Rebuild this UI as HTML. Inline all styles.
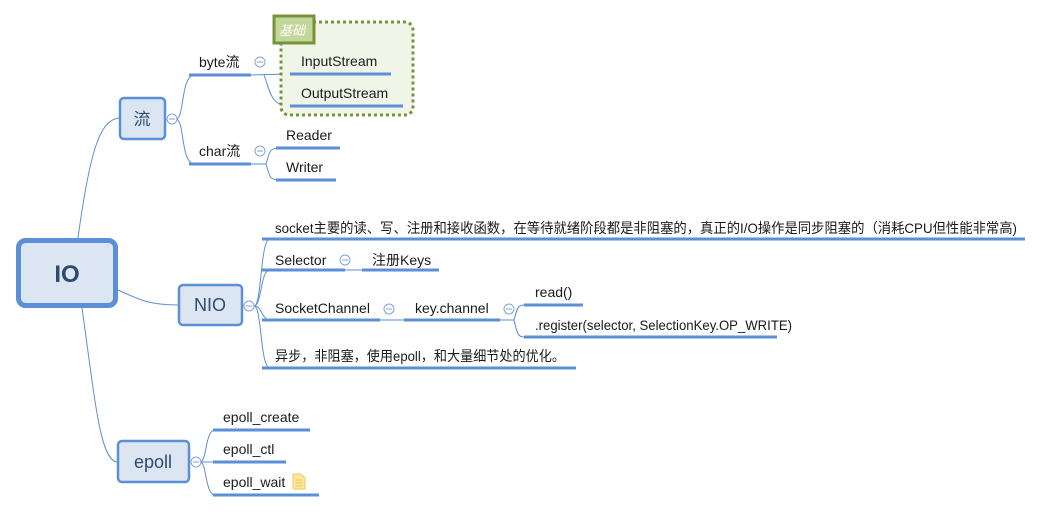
<!DOCTYPE html>
<html><head><meta charset="utf-8"><style>
html,body{margin:0;padding:0;background:#fff;width:1043px;height:512px;overflow:hidden}
svg text{font-family:"Liberation Sans","Noto Sans CJK SC",sans-serif;font-size:14px;fill:#1a1a1a}
</style></head><body>
<svg width="1043" height="512" viewBox="0 0 1043 512" xmlns="http://www.w3.org/2000/svg">
<g fill="none" stroke="#5b8fd6" stroke-width="1">
<path d="M78 238 C90 150 100 120 119 118"/>
<path d="M118 290 C140 300 150 305 178 305"/>
<path d="M82 308 C95 400 100 460 117 462"/>
<path d="M176 119 C185 119 180 75 195 75"/>
<path d="M176 119 C185 119 180 164 195 164"/>
<path d="M251 75 L290 74"/>
<path d="M264 75 C270 90 270 106 290 106"/>
<path d="M251 164 L266 164"/>
<path d="M266 164 C270 150 270 148 280 148"/>
<path d="M266 164 C270 178 270 180 280 180"/>
<path d="M254 306 C262 306 260 239 270 239"/>
<path d="M254 306 C262 306 260 270 270 270"/>
<path d="M254 306 C262 306 262 320 270 320"/>
<path d="M254 306 C262 306 260 368 270 368"/>
<path d="M345 270 L362 270"/>
<path d="M380 320 L404 320"/>
<path d="M500 320 L514 320"/>
<path d="M514 320 C518 305 518 305 528 305"/>
<path d="M514 320 C518 337 518 337 528 337"/>
<path d="M200 462 C207 462 205 430 215 430"/>
<path d="M200 462 L215 462"/>
<path d="M200 462 C207 462 205 495 215 495"/>
</g>
<rect x="281" y="22" width="132" height="93" rx="8" fill="#f1f5e8" stroke="#76923c" stroke-width="3" stroke-dasharray="3,3"/>
<rect x="274" y="16" width="40" height="27" fill="#c4d79b" stroke="#76923c" stroke-width="3"/>
<text x="279" y="35" style="fill:#fff;font-style:italic;font-size:13px">基础</text>
<g fill="#5b8fd6">
<rect x="189" y="73.5" width="62" height="3"/>
<rect x="189" y="162.5" width="62" height="3"/>
<rect x="290" y="72.5" width="101" height="3"/>
<rect x="290" y="104.5" width="113" height="3"/>
<rect x="276" y="146.5" width="64" height="3"/>
<rect x="276" y="178.5" width="60" height="3"/>
<rect x="262" y="237.5" width="763" height="3"/>
<rect x="262" y="268.5" width="83" height="3"/>
<rect x="362" y="268.5" width="77" height="3"/>
<rect x="262" y="318.5" width="118" height="3"/>
<rect x="404" y="318.5" width="96" height="3"/>
<rect x="524" y="303.5" width="59" height="3"/>
<rect x="524" y="335.5" width="253" height="3"/>
<rect x="262" y="366.5" width="314" height="3"/>
<rect x="213" y="428.5" width="97" height="3"/>
<rect x="213" y="460.5" width="73" height="3"/>
<rect x="213" y="493.5" width="106" height="3"/>
</g>
<rect x="18.5" y="240.5" width="97" height="65" rx="7" fill="#dce6f2" stroke="#5b8fd6" stroke-width="5"/>
<text x="67" y="282" text-anchor="middle" style="font-size:24px;font-weight:bold;fill:#2f4a70">IO</text>
<rect x="120" y="98" width="45" height="41" rx="4" fill="#dce6f2" stroke="#5b8fd6" stroke-width="2.5"/>
<text x="142" y="125" text-anchor="middle" style="font-size:17px;fill:#2f4a70">流</text>
<rect x="179" y="285" width="63" height="40" rx="4" fill="#dce6f2" stroke="#5b8fd6" stroke-width="2.5"/>
<text x="210" y="311" text-anchor="middle" style="font-size:18px;fill:#2f4a70">NIO</text>
<rect x="118" y="441" width="71" height="41" rx="4" fill="#dce6f2" stroke="#5b8fd6" stroke-width="2.5"/>
<text x="153" y="468" text-anchor="middle" style="font-size:18px;fill:#2f4a70">epoll</text>
<g fill="#fff" stroke="#7fa3d8" stroke-width="1">
<circle cx="172" cy="119" r="5"/><circle cx="260" cy="62" r="5"/><circle cx="260" cy="151" r="5"/>
<circle cx="249" cy="306" r="5"/><circle cx="345" cy="260" r="5"/><circle cx="389" cy="309" r="5"/>
<circle cx="509" cy="309" r="5"/><circle cx="196" cy="462" r="5"/>
</g>
<g stroke="#7fa3d8" stroke-width="1">
<path d="M169 119h6M257 62h6M257 151h6M246 306h6M342 260h6M386 309h6M506 309h6M193 462h6"/>
</g>
<text x="199" y="67">byte流</text>
<text x="199" y="156">char流</text>
<text x="301" y="66">InputStream</text>
<text x="301" y="98">OutputStream</text>
<text x="286" y="140">Reader</text>
<text x="286" y="172">Writer</text>
<text x="275" y="233" textLength="742" lengthAdjust="spacingAndGlyphs">socket主要的读、写、注册和接收函数，在等待就绪阶段都是非阻塞的，真正的I/O操作是同步阻塞的（消耗CPU但性能非常高)</text>
<text x="275" y="265">Selector</text>
<text x="372" y="265">注册Keys</text>
<text x="275" y="313">SocketChannel</text>
<text x="415" y="313">key.channel</text>
<text x="535" y="297">read()</text>
<text x="535" y="330" textLength="257" lengthAdjust="spacingAndGlyphs">.register(selector, SelectionKey.OP_WRITE)</text>
<text x="275" y="361" textLength="290" lengthAdjust="spacingAndGlyphs">异步，非阻塞，使用epoll，和大量细节处的优化。</text>
<text x="223" y="422">epoll_create</text>
<text x="223" y="454">epoll_ctl</text>
<text x="223" y="487">epoll_wait</text>
<path d="M293 474h8l4 4v11h-12z" fill="#fbe7a1" stroke="#f2c955"/>
<path d="M295.5 480h7M295.5 483h7M295.5 486h7" stroke="#f2c955"/>
</svg>
</body></html>
